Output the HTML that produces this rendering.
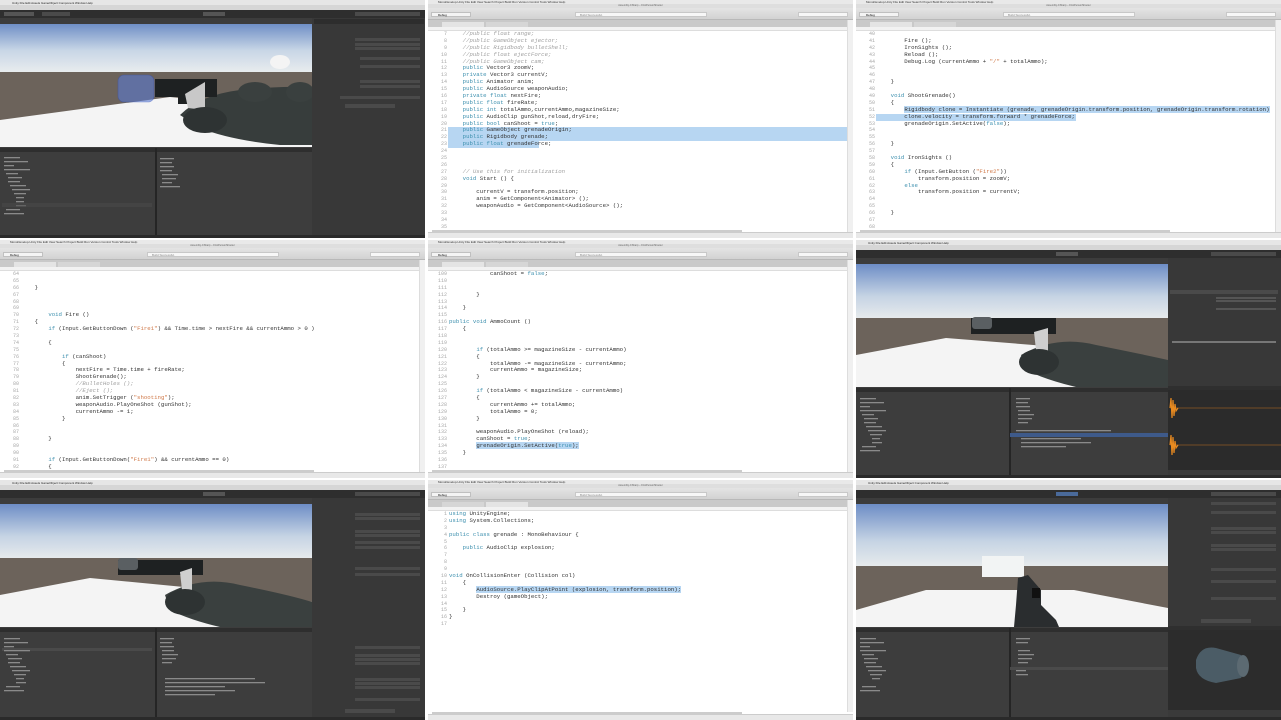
<!DOCTYPE html>
<html><head><meta charset="utf-8">
<style>
*{margin:0;padding:0;box-sizing:border-box}
html,body{width:1281px;height:720px;background:#fff;overflow:hidden;font-family:"Liberation Sans",sans-serif}
.t{position:absolute;width:425px;height:238px;overflow:hidden}
.code{background:#fff}
.mb{position:absolute;left:0;top:0;width:100%;height:4px;background:#e9e9e9;font-size:3px;color:#333;padding-left:10px;line-height:4px;white-space:nowrap}
.tt{position:absolute;left:0;top:4px;width:100%;height:4px;background:#dedede;font-size:2.5px;color:#666;text-align:center;line-height:4px}
.tb{position:absolute;left:0;top:8px;width:100%;height:12px;background:linear-gradient(#e4e4e4,#d2d2d2);border-bottom:1px solid #b8b8b8}
.tb .s{position:absolute;left:147px;top:4px;width:132px;height:5px;background:#f7f7f7;border:1px solid #c8c8c8;font-size:3px;color:#888;line-height:4px;padding-left:4px}
.tb .s2{position:absolute;left:370px;top:4px;width:50px;height:5px;background:#f7f7f7;border:1px solid #c8c8c8}
.tb .d{position:absolute;left:3px;top:4px;width:40px;height:5px;background:#f4f4f4;border:1px solid #c0c0c0;font-size:3px;line-height:4px;padding-left:6px}
.tabs{position:absolute;left:0;top:20px;width:100%;height:7px;background:#c9c9c9}
.tabs i{position:absolute;top:2px;height:5px;width:42px;background:#e4e4e4}
.bc{position:absolute;left:0;top:27px;width:100%;height:4px;background:#f2f2f2;border-bottom:1px solid #ddd}
.ed{position:absolute;left:0;top:31px;width:100%;height:201px}
.ln{display:block;height:6.9px;line-height:6.9px;font-family:"Liberation Mono",monospace;font-size:5.7px;color:#333;white-space:pre;position:relative}
.ln b{font-weight:normal;position:absolute;left:0;width:19px;text-align:right;color:#a8a8a8;font-size:5px}
.ln span.c{position:absolute;left:21px}
.k{color:#3c8fae}.cm{color:#a0a0a0;font-style:italic}.st{color:#d07a4a}
.hl{background:#b7d6f2}
.full{position:absolute;left:20px;right:6px;top:0;height:6.9px;background:#b7d6f2}
.sb{position:absolute;right:0;top:20px;width:6px;height:212px;background:#f0f0f0;border-left:1px solid #ddd}
.ft{position:absolute;left:0;bottom:0;width:100%;height:6px;background:#e8e8e8;border-top:1px solid #ccc}
.hs{position:absolute;left:4px;bottom:6px;width:310px;height:2px;background:#ccc}
</style></head><body>

<!-- Tile 1: Unity -->
<div class="t" style="left:0;top:0">
<svg width="425" height="238" viewBox="0 0 425 238">
<defs><linearGradient id="sky" x1="0" y1="0" x2="0" y2="1"><stop offset="0" stop-color="#6f8fc6"/><stop offset="0.55" stop-color="#c8d6e6"/><stop offset="1" stop-color="#e8ecee"/></linearGradient></defs>
<rect width="425" height="238" fill="#3a3a3a"/>
<rect width="425" height="5" fill="#e6e6e6"/>
<text x="12" y="4" font-size="3" fill="#222" font-family="Liberation Sans">Unity  File  Edit  Assets  GameObject  Component  Window  Help</text>
<rect y="5" width="425" height="5" fill="#d6d6d6"/>
<rect y="10" width="425" height="8" fill="#2e2e2e"/>
<rect x="4" y="12" width="30" height="4" fill="#555"/><rect x="42" y="12" width="28" height="4" fill="#4a4a4a"/>
<rect x="203" y="12" width="22" height="4" fill="#555"/>
<rect x="355" y="12" width="65" height="4" fill="#4a4a4a"/>
<rect y="18" width="312" height="6" fill="#3c3c3c"/>
<rect y="24" width="312" height="48" fill="url(#sky)"/>
<rect y="72" width="312" height="75" fill="#6c635b"/>
<polygon points="0,120 170,97 312,112 312,147 0,147" fill="#f4f4f4"/>
<ellipse cx="280" cy="62" rx="10" ry="7" fill="#f4f4f4"/>
<path d="M180 115 Q200 95 240 90 Q290 85 312 88 L312 145 L280 145 Q230 140 200 128 Z" fill="#373d3c"/>
<ellipse cx="255" cy="92" rx="17" ry="10" fill="#3a403f"/>
<ellipse cx="300" cy="92" rx="14" ry="10" fill="#3a403f"/>
<rect x="155" y="79" width="62" height="18" fill="#1e2122"/>
<rect x="178" y="94" width="12" height="10" fill="#1e2122"/>
<polygon points="185,94 205,82 205,110 188,108" fill="#c8c8c8"/>
<ellipse cx="205" cy="120" rx="22" ry="13" fill="#2e3333"/>
<rect x="118" y="75" width="36" height="27" rx="6" fill="#5a7ad0" opacity="0.6" stroke="#3050c0" stroke-width=".6"/>
<rect x="312" y="18" width="113" height="220" fill="#383838"/>
<rect x="314" y="19" width="110" height="5" fill="#2d2d2d"/>
<g fill="#4a4a4a"><rect x="355" y="38" width="65" height="3"/><rect x="355" y="43" width="65" height="3"/><rect x="355" y="47" width="65" height="3"/><rect x="360" y="57" width="60" height="3"/><rect x="360" y="65" width="60" height="3"/><rect x="360" y="80" width="60" height="3"/><rect x="360" y="85" width="60" height="3"/><rect x="340" y="96" width="80" height="3"/><rect x="345" y="104" width="50" height="4"/></g>
<rect y="147" width="312" height="88" fill="#3d3d3d"/>
<rect y="148" width="312" height="4" fill="#2e2e2e"/>
<rect x="155" y="148" width="2" height="87" fill="#252525"/>
<g fill="#8a8a8a"><rect x="4" y="157" width="16" height="1.3"/><rect x="4" y="161" width="24" height="1.3"/><rect x="4" y="165" width="10" height="1.3"/><rect x="4" y="169" width="26" height="1.3"/><rect x="6" y="173" width="12" height="1.3"/><rect x="8" y="177" width="14" height="1.3"/><rect x="8" y="181" width="12" height="1.3"/><rect x="10" y="185" width="16" height="1.3"/><rect x="12" y="189" width="18" height="1.3"/><rect x="14" y="193" width="12" height="1.3"/><rect x="16" y="197" width="8" height="1.3"/><rect x="16" y="201" width="8" height="1.3"/><rect x="16" y="205" width="10" height="1.3"/><rect x="6" y="209" width="14" height="1.3"/><rect x="4" y="213" width="20" height="1.3"/><rect x="160" y="158" width="14" height="1.3"/><rect x="160" y="162" width="12" height="1.3"/><rect x="160" y="166" width="14" height="1.3"/><rect x="160" y="170" width="12" height="1.3"/><rect x="162" y="174" width="16" height="1.3"/><rect x="162" y="178" width="14" height="1.3"/><rect x="162" y="182" width="10" height="1.3"/><rect x="160" y="186" width="20" height="1.3"/></g>
<rect x="2" y="203" width="150" height="4" fill="#4a4a4a" opacity=".6"/>
<rect y="235" width="425" height="3" fill="#2a2a2a"/>
</svg></div>

<!-- Tile 2: code -->
<div class="t code" style="left:428px;top:0">
<div class="mb">MonoDevelop-Unity   File   Edit   View   Search   Project   Build   Run   Version Control   Tools   Window   Help</div>
<div class="tt">Assembly-CSharp – FirstPersonShooter</div>
<div class="tb"><div class="d">Debug</div><div class="s">Build Successful.</div><div class="s2"></div></div>
<div class="tabs"><i style="left:14px"></i><i style="left:58px;background:#d6d6d6"></i></div>
<div class="bc"></div>
<div class="ed">
<div class="ln"><b>7</b><span class="c cm">    //public float range;</span></div>
<div class="ln"><b>8</b><span class="c cm">    //public GameObject ejector;</span></div>
<div class="ln"><b>9</b><span class="c cm">    //public Rigidbody bulletShell;</span></div>
<div class="ln"><b>10</b><span class="c cm">    //public float ejectForce;</span></div>
<div class="ln"><b>11</b><span class="c cm">    //public GameObject cam;</span></div>
<div class="ln"><b>12</b><span class="c">    <span class="k">public</span> Vector3 zoomV;</span></div>
<div class="ln"><b>13</b><span class="c">    <span class="k">private</span> Vector3 currentV;</span></div>
<div class="ln"><b>14</b><span class="c">    <span class="k">public</span> Animator anim;</span></div>
<div class="ln"><b>15</b><span class="c">    <span class="k">public</span> AudioSource weaponAudio;</span></div>
<div class="ln"><b>16</b><span class="c">    <span class="k">private float</span> nextFire;</span></div>
<div class="ln"><b>17</b><span class="c">    <span class="k">public float</span> fireRate;</span></div>
<div class="ln"><b>18</b><span class="c">    <span class="k">public int</span> totalAmmo,currentAmmo,magazineSize;</span></div>
<div class="ln"><b>19</b><span class="c">    <span class="k">public</span> AudioClip gunShot,reload,dryFire;</span></div>
<div class="ln"><b>20</b><span class="c">    <span class="k">public bool</span> canShoot = <span class="k">true</span>;</span></div>
<div class="ln"><i class="full"></i><b>21</b><span class="c">    <span class="k">public</span> GameObject grenadeOrigin;</span></div>
<div class="ln"><i class="full"></i><b>22</b><span class="c">    <span class="k">public</span> Rigidbody grenade;</span></div>
<div class="ln"><i class="full" style="right:auto;width:91px"></i><b>23</b><span class="c">    <span class="k">public float</span> grenadeForce;</span></div>
<div class="ln"><b>24</b></div>
<div class="ln"><b>25</b></div>
<div class="ln"><b>26</b></div>
<div class="ln"><b>27</b><span class="c cm">    // Use this for initialization</span></div>
<div class="ln"><b>28</b><span class="c">    <span class="k">void</span> Start () {</span></div>
<div class="ln"><b>29</b></div>
<div class="ln"><b>30</b><span class="c">        currentV = transform.position;</span></div>
<div class="ln"><b>31</b><span class="c">        anim = GetComponent&lt;Animator&gt; ();</span></div>
<div class="ln"><b>32</b><span class="c">        weaponAudio = GetComponent&lt;AudioSource&gt; ();</span></div>
<div class="ln"><b>33</b></div>
<div class="ln"><b>34</b></div>
<div class="ln"><b>35</b></div>
</div>
<div class="sb"></div><div class="hs"></div><div class="ft"></div>
</div>

<!-- Tile 3: code -->
<div class="t code" style="left:856px;top:0">
<div class="mb">MonoDevelop-Unity   File   Edit   View   Search   Project   Build   Run   Version Control   Tools   Window   Help</div>
<div class="tt">Assembly-CSharp – FirstPersonShooter</div>
<div class="tb"><div class="d">Debug</div><div class="s">Build Successful.</div><div class="s2"></div></div>
<div class="tabs"><i style="left:14px"></i><i style="left:58px;background:#d6d6d6"></i></div>
<div class="bc"></div>
<div class="ed">
<div class="ln"><b>40</b></div>
<div class="ln"><b>41</b><span class="c">        Fire ();</span></div>
<div class="ln"><b>42</b><span class="c">        IronSights ();</span></div>
<div class="ln"><b>43</b><span class="c">        Reload ();</span></div>
<div class="ln"><b>44</b><span class="c">        Debug.Log (currentAmmo + <span class="st">"/"</span> + totalAmmo);</span></div>
<div class="ln"><b>45</b></div>
<div class="ln"><b>46</b></div>
<div class="ln"><b>47</b><span class="c">    }</span></div>
<div class="ln"><b>48</b></div>
<div class="ln"><b>49</b><span class="c">    <span class="k">void</span> ShootGrenade()</span></div>
<div class="ln"><b>50</b><span class="c">    {</span></div>
<div class="ln"><b>51</b><span class="c">        <span class="hl">Rigidbody clone = Instantiate (grenade, grenadeOrigin.transform.position, grenadeOrigin.transform.rotation)</span></span></div>
<div class="ln"><i class="full" style="right:auto;width:200px"></i><b>52</b><span class="c">        clone.velocity = transform.forward * grenadeForce;</span></div>
<div class="ln"><b>53</b><span class="c">        grenadeOrigin.SetActive(<span class="k">false</span>);</span></div>
<div class="ln"><b>54</b></div>
<div class="ln"><b>55</b></div>
<div class="ln"><b>56</b><span class="c">    }</span></div>
<div class="ln"><b>57</b></div>
<div class="ln"><b>58</b><span class="c">    <span class="k">void</span> IronSights ()</span></div>
<div class="ln"><b>59</b><span class="c">    {</span></div>
<div class="ln"><b>60</b><span class="c">        <span class="k">if</span> (Input.GetButton (<span class="st">"Fire2"</span>))</span></div>
<div class="ln"><b>61</b><span class="c">            transform.position = zoomV;</span></div>
<div class="ln"><b>62</b><span class="c">        <span class="k">else</span></span></div>
<div class="ln"><b>63</b><span class="c">            transform.position = currentV;</span></div>
<div class="ln"><b>64</b></div>
<div class="ln"><b>65</b></div>
<div class="ln"><b>66</b><span class="c">    }</span></div>
<div class="ln"><b>67</b></div>
<div class="ln"><b>68</b></div>
</div>
<div class="sb"></div><div class="hs"></div><div class="ft"></div>
</div>

<!-- Tile 4: code -->
<div class="t code" style="left:0;top:240px">
<div class="mb">MonoDevelop-Unity   File   Edit   View   Search   Project   Build   Run   Version Control   Tools   Window   Help</div>
<div class="tt">Assembly-CSharp – FirstPersonShooter</div>
<div class="tb"><div class="d">Debug</div><div class="s">Build Successful.</div><div class="s2"></div></div>
<div class="tabs"><i style="left:14px"></i><i style="left:58px;background:#d6d6d6"></i></div>
<div class="bc"></div>
<div class="ed">
<div class="ln"><b>64</b></div>
<div class="ln"><b>65</b></div>
<div class="ln"><b>66</b><span class="c">    }</span></div>
<div class="ln"><b>67</b></div>
<div class="ln"><b>68</b></div>
<div class="ln"><b>69</b></div>
<div class="ln"><b>70</b><span class="c">        <span class="k">void</span> Fire ()</span></div>
<div class="ln"><b>71</b><span class="c">    {</span></div>
<div class="ln"><b>72</b><span class="c">        <span class="k">if</span> (Input.GetButtonDown (<span class="st">"Fire1"</span>) &amp;&amp; Time.time &gt; nextFire &amp;&amp; currentAmmo &gt; 0 )</span></div>
<div class="ln"><b>73</b></div>
<div class="ln"><b>74</b><span class="c">        {</span></div>
<div class="ln"><b>75</b></div>
<div class="ln"><b>76</b><span class="c">            <span class="k">if</span> (canShoot)</span></div>
<div class="ln"><b>77</b><span class="c">            {</span></div>
<div class="ln"><b>78</b><span class="c">                nextFire = Time.time + fireRate;</span></div>
<div class="ln"><b>79</b><span class="c">                ShootGrenade();</span></div>
<div class="ln"><b>80</b><span class="c cm">                //BulletHoles ();</span></div>
<div class="ln"><b>81</b><span class="c cm">                //Eject ();</span></div>
<div class="ln"><b>82</b><span class="c">                anim.SetTrigger (<span class="st">"shooting"</span>);</span></div>
<div class="ln"><b>83</b><span class="c">                weaponAudio.PlayOneShot (gunShot);</span></div>
<div class="ln"><b>84</b><span class="c">                currentAmmo -= 1;</span></div>
<div class="ln"><b>85</b><span class="c">            }</span></div>
<div class="ln"><b>86</b></div>
<div class="ln"><b>87</b></div>
<div class="ln"><b>88</b><span class="c">        }</span></div>
<div class="ln"><b>89</b></div>
<div class="ln"><b>90</b></div>
<div class="ln"><b>91</b><span class="c">        <span class="k">if</span> (Input.GetButtonDown(<span class="st">"Fire1"</span>) &amp;&amp; currentAmmo == 0)</span></div>
<div class="ln"><b>92</b><span class="c">        {</span></div>
</div>
<div class="sb"></div><div class="hs"></div><div class="ft"></div>
</div>

<!-- Tile 5: code -->
<div class="t code" style="left:428px;top:240px">
<div class="mb">MonoDevelop-Unity   File   Edit   View   Search   Project   Build   Run   Version Control   Tools   Window   Help</div>
<div class="tt">Assembly-CSharp – FirstPersonShooter</div>
<div class="tb"><div class="d">Debug</div><div class="s">Build Successful.</div><div class="s2"></div></div>
<div class="tabs"><i style="left:14px"></i><i style="left:58px;background:#d6d6d6"></i></div>
<div class="bc"></div>
<div class="ed">
<div class="ln"><b>109</b><span class="c">            canShoot = <span class="k">false</span>;</span></div>
<div class="ln"><b>110</b></div>
<div class="ln"><b>111</b></div>
<div class="ln"><b>112</b><span class="c">        }</span></div>
<div class="ln"><b>113</b></div>
<div class="ln"><b>114</b><span class="c">    }</span></div>
<div class="ln"><b>115</b></div>
<div class="ln"><b>116</b><span class="c"><span class="k">public</span> <span class="k">void</span> AmmoCount ()</span></div>
<div class="ln"><b>117</b><span class="c">    {</span></div>
<div class="ln"><b>118</b></div>
<div class="ln"><b>119</b></div>
<div class="ln"><b>120</b><span class="c">        <span class="k">if</span> (totalAmmo &gt;= magazineSize - currentAmmo)</span></div>
<div class="ln"><b>121</b><span class="c">        {</span></div>
<div class="ln"><b>122</b><span class="c">            totalAmmo -= magazineSize - currentAmmo;</span></div>
<div class="ln"><b>123</b><span class="c">            currentAmmo = magazineSize;</span></div>
<div class="ln"><b>124</b><span class="c">        }</span></div>
<div class="ln"><b>125</b></div>
<div class="ln"><b>126</b><span class="c">        <span class="k">if</span> (totalAmmo &lt; magazineSize - currentAmmo)</span></div>
<div class="ln"><b>127</b><span class="c">        {</span></div>
<div class="ln"><b>128</b><span class="c">            currentAmmo += totalAmmo;</span></div>
<div class="ln"><b>129</b><span class="c">            totalAmmo = 0;</span></div>
<div class="ln"><b>130</b><span class="c">        }</span></div>
<div class="ln"><b>131</b></div>
<div class="ln"><b>132</b><span class="c">        weaponAudio.PlayOneShot (reload);</span></div>
<div class="ln"><b>133</b><span class="c">        canShoot = <span class="k">true</span>;</span></div>
<div class="ln"><b>134</b><span class="c">        <span class="hl">grenadeOrigin.SetActive(<span class="k">true</span>);</span></span></div>
<div class="ln"><b>135</b><span class="c">    }</span></div>
<div class="ln"><b>136</b></div>
<div class="ln"><b>137</b></div>
</div>
<div class="sb"></div><div class="hs"></div><div class="ft"></div>
</div>

<!-- Tile 6: Unity with audio -->
<div class="t" style="left:856px;top:240px">
<svg width="425" height="238" viewBox="0 0 425 238">
<defs><linearGradient id="sky6" gradientUnits="userSpaceOnUse" x1="0" y1="24" x2="0" y2="78"><stop offset="0" stop-color="#6d8dc6"/><stop offset="0.6" stop-color="#c6d4e4"/><stop offset="1" stop-color="#e6eaec"/></linearGradient></defs>
<rect width="425" height="238" fill="#3a3a3a"/>
<rect width="425" height="5" fill="#e6e6e6"/>
<text x="12" y="4" font-size="3" fill="#222" font-family="Liberation Sans">Unity  File  Edit  Assets  GameObject  Component  Window  Help</text>
<rect y="5" width="425" height="5" fill="#d6d6d6"/>
<rect y="10" width="425" height="8" fill="#2e2e2e"/>
<rect x="200" y="12" width="22" height="4" fill="#555"/><rect x="355" y="12" width="65" height="4" fill="#4a4a4a"/>
<rect y="18" width="312" height="6" fill="#3c3c3c"/>
<rect y="24" width="312" height="54" fill="url(#sky6)"/>
<rect y="78" width="312" height="69" fill="#6c635b"/>
<polygon points="0,115 90,98 215,108 312,122 312,147 0,147" fill="#f4f4f4"/>
<path d="M165 115 Q200 95 240 105 Q290 115 312 120 L312 147 L220 147 Q190 140 170 130 Z" fill="#3a403f"/>
<rect x="115" y="78" width="85" height="16" fill="#1e2122"/>
<rect x="116" y="77" width="20" height="12" rx="3" fill="#5a5f62"/>
<polygon points="178,92 192,88 192,112 180,110" fill="#cfcfcf"/>
<ellipse cx="183" cy="122" rx="20" ry="13" fill="#2e3333"/>
<rect x="312" y="18" width="113" height="128" fill="#383838"/>
<rect x="314" y="50" width="108" height="4" fill="#4a4a4a"/>
<g fill="#555"><rect x="360" y="57" width="60" height="2"/><rect x="360" y="60" width="60" height="2"/><rect x="360" y="68" width="60" height="2"/></g>
<rect x="316" y="101" width="104" height="2" fill="#777"/>
<rect y="147" width="312" height="88" fill="#3d3d3d"/>
<rect y="148" width="312" height="4" fill="#2e2e2e"/>
<rect x="153" y="148" width="2" height="87" fill="#252525"/>
<rect x="154" y="193" width="158" height="4" fill="#3e5a8a"/>
<g fill="#8a8a8a"><rect x="4" y="158" width="16" height="1.3"/><rect x="4" y="162" width="24" height="1.3"/><rect x="4" y="166" width="10" height="1.3"/><rect x="4" y="170" width="26" height="1.3"/><rect x="6" y="174" width="12" height="1.3"/><rect x="8" y="178" width="14" height="1.3"/><rect x="8" y="182" width="12" height="1.3"/><rect x="10" y="186" width="16" height="1.3"/><rect x="12" y="190" width="18" height="1.3"/><rect x="14" y="194" width="12" height="1.3"/><rect x="16" y="198" width="8" height="1.3"/><rect x="16" y="202" width="10" height="1.3"/><rect x="6" y="206" width="14" height="1.3"/><rect x="4" y="210" width="20" height="1.3"/><rect x="160" y="158" width="14" height="1.3"/><rect x="160" y="162" width="12" height="1.3"/><rect x="160" y="166" width="14" height="1.3"/><rect x="162" y="170" width="12" height="1.3"/><rect x="162" y="174" width="16" height="1.3"/><rect x="162" y="178" width="14" height="1.3"/><rect x="162" y="182" width="10" height="1.3"/><rect x="160" y="190" width="95" height="1.3"/><rect x="165" y="198" width="60" height="1.3"/><rect x="165" y="202" width="70" height="1.3"/><rect x="165" y="206" width="45" height="1.3"/></g>
<rect x="312" y="146" width="113" height="4" fill="#2f2f2f"/>
<rect x="312" y="150" width="113" height="80" fill="#2b2b2b"/>
<line x1="314" y1="168" x2="425" y2="168" stroke="#c07020" stroke-width=".6"/>
<line x1="314" y1="205" x2="425" y2="205" stroke="#c07020" stroke-width=".6"/>
<path d="M314 168 L315 158 L316 178 L317 160 L318 176 L319 164 L320 171 L322 168" stroke="#e88a20" stroke-width="1.2" fill="none"/>
<path d="M314 205 L315 195 L316 215 L317 197 L318 213 L319 201 L320 208 L322 205" stroke="#e88a20" stroke-width="1.2" fill="none"/>
<rect x="312" y="230" width="113" height="5" fill="#3a3a3a"/>
<rect y="235" width="425" height="3" fill="#2a2a2a"/>
</svg></div>

<!-- Tile 7: Unity -->
<div class="t" style="left:0;top:480px;height:240px">
<svg width="425" height="240" viewBox="0 0 425 240">
<defs><linearGradient id="sky7" gradientUnits="userSpaceOnUse" x1="0" y1="24" x2="0" y2="78"><stop offset="0" stop-color="#6d8dc6"/><stop offset="0.6" stop-color="#c6d4e4"/><stop offset="1" stop-color="#e6eaec"/></linearGradient></defs>
<rect width="425" height="240" fill="#3a3a3a"/>
<rect width="425" height="5" fill="#e6e6e6"/>
<text x="12" y="4" font-size="3" fill="#222" font-family="Liberation Sans">Unity  File  Edit  Assets  GameObject  Component  Window  Help</text>
<rect y="5" width="425" height="5" fill="#d6d6d6"/>
<rect y="10" width="425" height="8" fill="#2e2e2e"/>
<rect x="203" y="12" width="22" height="4" fill="#555"/><rect x="355" y="12" width="65" height="4" fill="#4a4a4a"/>
<rect y="18" width="312" height="6" fill="#3c3c3c"/>
<rect y="24" width="312" height="54" fill="url(#sky7)"/>
<rect y="78" width="312" height="69" fill="#6c635b"/>
<polygon points="0,115 90,98 215,110 312,122 312,147 0,147" fill="#f4f4f4"/>
<path d="M165 115 Q200 95 240 105 Q290 115 312 122 L312 147 L220 147 Q190 140 170 130 Z" fill="#3a403f"/>
<rect x="118" y="80" width="85" height="15" fill="#1e2122"/>
<rect x="118" y="78" width="20" height="12" rx="3" fill="#5a5f62"/>
<polygon points="180,92 192,88 192,112 182,110" fill="#cfcfcf"/>
<ellipse cx="185" cy="122" rx="20" ry="13" fill="#2e3333"/>
<rect x="312" y="18" width="113" height="222" fill="#383838"/>
<g fill="#4a4a4a"><rect x="355" y="33" width="65" height="3"/><rect x="355" y="37" width="65" height="3"/><rect x="355" y="50" width="65" height="3"/><rect x="355" y="54" width="65" height="3"/><rect x="355" y="61" width="65" height="3"/><rect x="355" y="66" width="65" height="3"/><rect x="355" y="87" width="65" height="3"/><rect x="355" y="93" width="65" height="3"/><rect x="355" y="166" width="65" height="3"/><rect x="355" y="174" width="65" height="3"/><rect x="355" y="178" width="65" height="3"/><rect x="355" y="182" width="65" height="3"/><rect x="355" y="198" width="65" height="3"/><rect x="355" y="202" width="65" height="3"/><rect x="355" y="206" width="65" height="3"/><rect x="355" y="218" width="65" height="3"/><rect x="345" y="229" width="50" height="4"/></g>
<rect y="147" width="312" height="90" fill="#3d3d3d"/>
<rect y="148" width="312" height="4" fill="#2e2e2e"/>
<rect x="155" y="148" width="2" height="89" fill="#252525"/>
<rect x="2" y="168" width="150" height="3" fill="#4a4a4a"/>
<g fill="#8a8a8a"><rect x="4" y="158" width="16" height="1.3"/><rect x="4" y="162" width="24" height="1.3"/><rect x="4" y="166" width="10" height="1.3"/><rect x="4" y="170" width="26" height="1.3"/><rect x="6" y="174" width="12" height="1.3"/><rect x="8" y="178" width="14" height="1.3"/><rect x="8" y="182" width="12" height="1.3"/><rect x="10" y="186" width="16" height="1.3"/><rect x="12" y="190" width="18" height="1.3"/><rect x="14" y="194" width="12" height="1.3"/><rect x="16" y="198" width="8" height="1.3"/><rect x="16" y="202" width="10" height="1.3"/><rect x="6" y="206" width="14" height="1.3"/><rect x="4" y="210" width="20" height="1.3"/><rect x="160" y="158" width="14" height="1.3"/><rect x="160" y="162" width="12" height="1.3"/><rect x="160" y="166" width="14" height="1.3"/><rect x="162" y="170" width="12" height="1.3"/><rect x="162" y="174" width="16" height="1.3"/><rect x="162" y="178" width="14" height="1.3"/><rect x="162" y="182" width="10" height="1.3"/><rect x="165" y="198" width="90" height="1.3"/><rect x="165" y="202" width="100" height="1.3"/><rect x="165" y="206" width="60" height="1.3"/><rect x="165" y="210" width="70" height="1.3"/><rect x="165" y="214" width="50" height="1.3"/></g>
<rect y="237" width="425" height="3" fill="#2a2a2a"/>
</svg></div>

<!-- Tile 8: code -->
<div class="t code" style="left:428px;top:480px;height:240px">
<div class="mb">MonoDevelop-Unity   File   Edit   View   Search   Project   Build   Run   Version Control   Tools   Window   Help</div>
<div class="tt">Assembly-CSharp – FirstPersonShooter</div>
<div class="tb"><div class="d">Debug</div><div class="s">Build Successful.</div><div class="s2"></div></div>
<div class="tabs"><i style="left:14px;background:#d6d6d6"></i><i style="left:58px"></i></div>
<div class="bc"></div>
<div class="ed">
<div class="ln"><b>1</b><span class="c"><span class="k">using</span> UnityEngine;</span></div>
<div class="ln"><b>2</b><span class="c"><span class="k">using</span> System.Collections;</span></div>
<div class="ln"><b>3</b></div>
<div class="ln"><b>4</b><span class="c"><span class="k">public class</span> grenade : MonoBehaviour {</span></div>
<div class="ln"><b>5</b></div>
<div class="ln"><b>6</b><span class="c">    <span class="k">public</span> AudioClip explosion;</span></div>
<div class="ln"><b>7</b></div>
<div class="ln"><b>8</b></div>
<div class="ln"><b>9</b></div>
<div class="ln"><b>10</b><span class="c"><span class="k">void</span> OnCollisionEnter (Collision col)</span></div>
<div class="ln"><b>11</b><span class="c">    {</span></div>
<div class="ln"><b>12</b><span class="c">        <span class="hl">AudioSource.PlayClipAtPoint (explosion, transform.position);</span></span></div>
<div class="ln"><b>13</b><span class="c">        Destroy (gameObject);</span></div>
<div class="ln"><b>14</b></div>
<div class="ln"><b>15</b><span class="c">    }</span></div>
<div class="ln"><b>16</b><span class="c">}</span></div>
<div class="ln"><b>17</b></div>
</div>
<div class="sb"></div><div class="hs"></div><div class="ft"></div>
</div>

<!-- Tile 9: Unity game view -->
<div class="t" style="left:856px;top:480px;height:240px">
<svg width="425" height="240" viewBox="0 0 425 240">
<defs><linearGradient id="sky9" gradientUnits="userSpaceOnUse" x1="0" y1="24" x2="0" y2="86"><stop offset="0" stop-color="#6d8dc6"/><stop offset="0.6" stop-color="#c6d4e4"/><stop offset="1" stop-color="#e6eaec"/></linearGradient></defs>
<rect width="425" height="240" fill="#3a3a3a"/>
<rect width="425" height="5" fill="#e6e6e6"/>
<text x="12" y="4" font-size="3" fill="#222" font-family="Liberation Sans">Unity  File  Edit  Assets  GameObject  Component  Window  Help</text>
<rect y="5" width="425" height="5" fill="#d6d6d6"/>
<rect y="10" width="425" height="8" fill="#2e2e2e"/>
<rect x="200" y="12" width="22" height="4" fill="#4a6a9a"/><rect x="355" y="12" width="65" height="4" fill="#4a4a4a"/>
<rect y="18" width="312" height="6" fill="#3c3c3c"/>
<rect y="24" width="312" height="62" fill="url(#sky9)"/>
<rect y="86" width="312" height="61" fill="#6c635b"/>
<polygon points="0,130 70,110 218,110 312,128 312,147 0,147" fill="#f4f4f4"/>
<rect x="126" y="76" width="42" height="21" fill="#f2f4f4"/>
<path d="M162 98 L172 95 L185 110 L185 125 L200 140 L203 147 L158 147 L160 125 Z" fill="#2a2d2f"/>
<rect x="176" y="108" width="8" height="10" fill="#111"/>
<rect x="312" y="18" width="113" height="128" fill="#383838"/>
<g fill="#4a4a4a"><rect x="355" y="22" width="65" height="3"/><rect x="355" y="31" width="65" height="3"/><rect x="355" y="47" width="65" height="3"/><rect x="355" y="51" width="65" height="3"/><rect x="355" y="64" width="65" height="3"/><rect x="355" y="68" width="65" height="3"/><rect x="355" y="88" width="65" height="3"/><rect x="355" y="100" width="65" height="3"/><rect x="355" y="117" width="65" height="3"/><rect x="345" y="139" width="50" height="4"/></g>
<rect y="147" width="312" height="90" fill="#3d3d3d"/>
<rect y="148" width="312" height="4" fill="#2e2e2e"/>
<rect x="153" y="148" width="2" height="89" fill="#252525"/>
<g fill="#8a8a8a"><rect x="4" y="158" width="16" height="1.3"/><rect x="4" y="162" width="24" height="1.3"/><rect x="4" y="166" width="10" height="1.3"/><rect x="4" y="170" width="26" height="1.3"/><rect x="6" y="174" width="12" height="1.3"/><rect x="8" y="178" width="14" height="1.3"/><rect x="8" y="182" width="12" height="1.3"/><rect x="10" y="186" width="16" height="1.3"/><rect x="12" y="190" width="18" height="1.3"/><rect x="14" y="194" width="12" height="1.3"/><rect x="16" y="198" width="8" height="1.3"/><rect x="6" y="206" width="14" height="1.3"/><rect x="4" y="210" width="20" height="1.3"/><rect x="160" y="158" width="14" height="1.3"/><rect x="160" y="162" width="12" height="1.3"/><rect x="162" y="170" width="12" height="1.3"/><rect x="162" y="174" width="16" height="1.3"/><rect x="162" y="178" width="14" height="1.3"/><rect x="162" y="182" width="10" height="1.3"/><rect x="160" y="190" width="10" height="1.3"/><rect x="160" y="194" width="12" height="1.3"/></g>
<rect x="154" y="187" width="158" height="3" fill="#4a4a4a"/>
<rect x="312" y="146" width="113" height="4" fill="#2f2f2f"/>
<rect x="312" y="150" width="113" height="80" fill="#2c2c2c"/>
<path d="M340 180 Q345 165 360 168 L385 175 Q392 185 385 198 L360 203 Q342 200 340 188 Z" fill="#4b5c66"/>
<ellipse cx="387" cy="186" rx="6" ry="11" fill="#5c6a72"/>
<rect x="312" y="230" width="113" height="5" fill="#3a3a3a"/>
<rect y="237" width="425" height="3" fill="#2a2a2a"/>
</svg></div>

</body></html>
